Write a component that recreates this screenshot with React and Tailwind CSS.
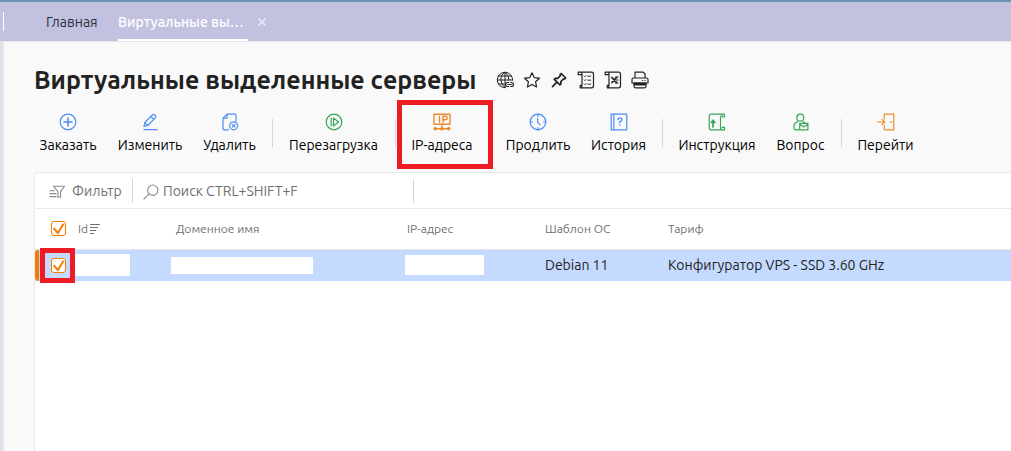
import { useState } from "react";

function Icon({ children, className = "", size = 18, width = 1.2 }) {
  return (
    <svg
      className={`shrink-0 ${className}`}
      width={size}
      height={size}
      viewBox="0 0 18 18"
      fill="none"
      stroke="currentColor"
      strokeWidth={width}
      strokeLinejoin="round"
      strokeLinecap="round"
      aria-hidden="true"
    >
      {children}
    </svg>
  );
}

const icons = {
  add: (
    <>
      <circle cx="9" cy="9" r="7.8" />
      <path d="M9 5v8M5 9h8" strokeWidth="1.6" />
    </>
  ),
  edit: (
    <>
      <path d="M3 13.5l.8-4L11.6 1.8q1-.8 2 0l.9.9q.8 1 0 2L6.8 12.5zM10 3.6l2.8 2.8M4 9.6l2.7 2.8" />
      <path d="M3 16.7h13" />
    </>
  ),
  remove: (
    <>
      <path d="M7.5 16.8H3q-1 0-1-1V5.2L6 1.2h8q1 0 1 1v6M6 1.2v4H2" />
      <circle cx="12.6" cy="12.8" r="4" />
      <path d="M11.2 11.4l2.8 2.8M14 11.4l-2.8 2.8" />
    </>
  ),
  reboot: (
    <>
      <circle cx="9" cy="9" r="7.8" />
      <path d="M6.2 5v8M8.5 5l5 4-5 4z" />
    </>
  ),
  ip: (
    <>
      <path d="M1 1.2h16v10H1zM6.5 3.2v6M10 9.2v-6h2.5q1.7 0 1.7 1.7t-1.7 1.8H10M9 11.5v4M2 15.8h14" strokeWidth="1.4" />
      <circle cx="2.2" cy="15.8" r="1.2" fill="currentColor" />
      <circle cx="9" cy="15.8" r="1.2" fill="currentColor" />
      <circle cx="15.8" cy="15.8" r="1.2" fill="currentColor" />
    </>
  ),
  clock: (
    <>
      <circle cx="9" cy="9" r="7.8" />
      <path d="M9 1.2V3.4M9 14.6v2.2M1.2 9h2.2M14.6 9h2.2M8.6 5.4v3.8l2.7 2.7" />
    </>
  ),
  history: (
    <>
      <path d="M1.2 1.2h15.6v15.6H1.2zM3.8 1.2v15.6" />
      <path d="M8 6.6q0-1.7 1.9-1.7t1.9 1.7q0 1.1-1.9 2.1v1.1M9.9 12v.2" strokeWidth="1.4" />
    </>
  ),
  manual: (
    <>
      <path d="M12.5 3v11.8q0 2 2 2h2v-2.4h-2.3M14.5 16.8H3.2q-2 0-2-2V3.2q0-2 2-2h13.3v2.6h-2.2V3q0-1.6-1.8-1.8" />
      <path d="M5 14V8M3.4 9.4L5 7.2l1.8 2.2z" strokeWidth="1.7" />
    </>
  ),
  question: (
    <>
      <circle cx="8.3" cy="4.7" r="3.5" />
      <path d="M5.6 8.8q-3.6.9-3.6 4.5v1.8q0 1.7 1.6 1.7h3.7M11.3 8.8l1.7.9M7.7 10.3h8.2v6.5H7.7zM7.7 11.2l4.1 2.8 4.1-2.8" />
    </>
  ),
  enter: (
    <path d="M7.3 5.8V1.2h9.5v15.6H7.3v-4.6M.6 9h7M5 6.4L7.8 9 5 11.6M13.2 9h1.8" />
  ),
};

const pageTools = [
  {
    label: "Ссылка на страницу",
    art: (
      <>
        <path d="M16.7 9A7.7 7.7 0 1 0 9 16.7M2.5 5h13M1.3 9h15.4M2.5 13H8M9 1.3v15.4M9 1.3Q4.5 4 4.9 9T9 16.7M9 1.3q4.1 3 4.1 7.7" strokeWidth="1" />
        <path d="M12.7 11.5h-1.1q-2 .1-2 2t2 2h1.1M14.7 11.5h.9q1.9.1 1.9 2t-1.9 2h-.9M12 13.5h3.3" strokeWidth="1.2" />
      </>
    ),
  },
  {
    label: "В избранное",
    art: <path d="M9 1.8l2.2 4.8 5.2.6-3.8 3.6 1 5.2L9 13.4 4.4 16l1-5.2-3.8-3.6 5.2-.6z" />,
  },
  {
    label: "Закрепить",
    art: <path d="M11.2 2.5l4.5 4.5-1 1-1.1-.2-2.7 2.7v2.4l-1 1-5.6-5.6 1-1h2.4l2.7-2.7-.2-1.1zM7 11.1l-4.5 4.5" strokeWidth="1.7" />,
  },
  {
    label: "Журнал",
    art: (
      <>
        <path d="M4 3.7H1.2V1.2h13.3q2 0 2 2v11.6q0 2-2 2H3.2v-2.5H5M4 1.2q1 .5 1 2v11.5q0 1.7-1.6 2.1" />
        <path d="M7.2 5l.7.7L9 4.5M10.7 5.2h3M7.2 9l.7.7L9 8.5M10.7 9.2h3M7.2 13l.7.7L9 12.5M10.7 13.2h3" strokeWidth=".9" />
      </>
    ),
  },
  {
    label: "Экспорт в Excel",
    art: (
      <>
        <path d="M4 3.7H1.2V1.2h13.3q2 0 2 2v11.6q0 2-2 2H3.2v-2.5H5M4 1.2q1 .5 1 2v11.5q0 1.7-1.6 2.1" />
        <path d="M8 6.5l4.5 5M12.5 6.5L8 11.5" strokeWidth="1.8" />
        <path d="M11.5 6h2.6M12 9h2.2M11.5 12h2.6" />
      </>
    ),
  },
  {
    label: "Печать",
    art: (
      <>
        <path d="M4 7V1.2h8.2L14 3v4M2.5 7h13q1.5 0 1.5 1.5v3.5H1V8.5Q1 7 2.5 7zM11.5 9.5h.2M14 9.5h.2" />
        <path d="M3 12h12v3.3q0 1.5-1.5 1.5h-9Q3 16.8 3 15.3z" />
        <path d="M4 13.2h10" strokeWidth="2.4" />
      </>
    ),
  },
];

const actionGroups = [
  [
    { label: "Заказать", icon: "add", tone: "text-[#4a8ff5]", width: "w-[78px]" },
    { label: "Изменить", icon: "edit", tone: "text-[#4a8ff5]", width: "w-[86px]" },
    { label: "Удалить", icon: "remove", tone: "text-[#4a8ff5]", width: "w-[73px]" },
  ],
  [{ label: "Перезагрузка", icon: "reboot", tone: "text-[#38a657]", width: "w-[111px]" }],
  [{ label: "IP-адреса", icon: "ip", tone: "text-[#f08a2c]", width: "w-[82px]", marked: true }],
  [
    { label: "Продлить", icon: "clock", tone: "text-[#4a8ff5]", width: "w-[86px]" },
    { label: "История", icon: "history", tone: "text-[#4a8ff5]", width: "w-[75px]" },
  ],
  [
    { label: "Инструкция", icon: "manual", tone: "text-[#38a657]", width: "w-[98px]" },
    { label: "Вопрос", icon: "question", tone: "text-[#38a657]", width: "w-[69px]" },
  ],
  [{ label: "Перейти", icon: "enter", tone: "text-[#f08a2c]", width: "w-[77px]" }],
];

function CheckBox({ label, checked, onChange }) {
  return (
    <label className="relative block size-[15px]">
      <input
        type="checkbox"
        aria-label={label}
        checked={checked}
        onChange={onChange}
        className="peer block size-[15px] appearance-none rounded-[3px] border border-[#f57c00] bg-white"
      />
      <svg
        className="pointer-events-none absolute inset-0 hidden text-[#f57c00] peer-checked:block"
        width="15"
        height="15"
        viewBox="0 0 15 15"
        fill="none"
        stroke="currentColor"
        strokeWidth="2"
        aria-hidden="true"
      >
        <path d="M2.6 7.2l4.2 4.8L12.6 2.8" />
      </svg>
    </label>
  );
}

export default function App() {
  const [selected, setSelected] = useState(true);
  const toggle = () => setSelected(!selected);

  return (
    <div className="flex min-h-screen flex-col overflow-hidden bg-[#f9f9f9] font-['Ubuntu','Noto_Sans',sans-serif] text-[14px] text-[#222]">
      <nav className="flex h-[42px] shrink-0 items-stretch border-t-2 border-b border-t-[#6b93b8] border-b-[#e6e5ec] bg-[#c3c1e0]">
        <span className="my-[10px] ml-[3px] w-px bg-white" />
        <a href="#home" className="ml-[42px] flex w-[52px] items-center whitespace-nowrap pt-[2px] text-[#27303f]">
          Главная
        </a>
        <a
          href="#servers"
          className="ml-5 flex w-[130px] items-center whitespace-nowrap border-b-2 border-white pt-1 font-medium text-white"
        >
          Виртуальные вы…
        </a>
        <button type="button" aria-label="Закрыть вкладку" className="ml-2 flex w-3 items-center justify-center text-[#eeeef8]">
          <svg width="8" height="8" viewBox="0 0 8 8" stroke="currentColor" strokeWidth="1.4" aria-hidden="true">
            <path d="M.5.5l7 7M7.5.5l-7 7" />
          </svg>
        </button>
      </nav>

      <div className="flex grow">
        <div className="w-1 shrink-0 border-r border-[#ebebeb] bg-[#e0dfe9]" />
        <main className="flex min-w-0 grow flex-col pl-[30px]">
          <header className="flex h-[60px] items-center gap-5 pt-4">
            <h1 className="w-[442px] shrink-0 whitespace-nowrap text-[25px] leading-8 font-semibold">
              Виртуальные выделенные серверы
            </h1>
            <div className="flex gap-[9px]">
              {pageTools.map((tool) => (
                <button key={tool.label} type="button" aria-label={tool.label} className="text-[#222]">
                  <Icon>{tool.art}</Icon>
                </button>
              ))}
            </div>
          </header>

          <div className="-ml-[5px] flex h-[70px] items-start pt-[11px]">
            {actionGroups.map((group, index) => (
              <div key={group[0].label} className="flex">
                {index > 0 && (
                  <span className="flex w-3 shrink-0 justify-center pt-[6px]">
                    <span className="h-7 w-px bg-[#d5d5d5]" />
                  </span>
                )}
                {group.map((action) => (
                  <button
                    key={action.label}
                    type="button"
                    className={`relative flex shrink-0 flex-col items-center gap-1 whitespace-nowrap text-[14px] leading-5 text-black ${action.width}`}
                  >
                    <Icon className={action.tone}>{icons[action.icon]}</Icon>
                    {action.label}
                    {action.marked && (
                      <span className="absolute -top-[13px] -right-[10px] -left-1 h-[69px] border-5 border-[#ed1c24]" />
                    )}
                  </button>
                ))}
              </div>
            ))}
          </div>

          <section className="grow rounded-tl-sm border-t border-l border-[#e9e9e9] bg-white">
            <div className="flex h-9 items-center border-b border-[#ebebeb] pl-[14px] text-[#6f6f6f]">
              <button type="button" className="flex w-[83px] items-center gap-[7px] pt-[2px]">
                <Icon size={16} className="text-[#888]">
                  <path d="M5 2.5h12.5l-4.5 6V15h-3V8.5zM1 7.5h5M1 10.8h7M1 14.2h7" />
                </Icon>
                Фильтр
              </button>
              <span className="h-6 w-px bg-[#d5d5d5]" />
              <label className="flex w-[280px] items-center gap-1 pt-[2px] pl-[10px]">
                <Icon size={16} className="text-[#888]">
                  <circle cx="11" cy="7" r="5.8" />
                  <path d="M6.8 11.2L1 17" />
                </Icon>
                <input
                  type="search"
                  aria-label="Поиск"
                  placeholder="Поиск CTRL+SHIFT+F"
                  className="min-w-0 grow bg-transparent outline-none placeholder:text-[#6f6f6f]"
                />
              </label>
              <span className="h-6 w-px bg-[#d5d5d5]" />
            </div>

            <table className="w-full table-fixed border-collapse text-left">
              <thead>
                <tr className="h-10 border-b border-[#e6e6e6] text-[12px] text-[#707070]">
                  <th className="w-[43px] pl-4">
                    <CheckBox label="Выбрать все" checked={selected} onChange={toggle} />
                  </th>
                  <th className="w-[98px] font-normal">
                    <button type="button" className="flex items-center gap-px">
                      Id
                      <svg width="12" height="12" viewBox="0 0 12 12" stroke="currentColor" aria-hidden="true">
                        <path d="M1 1.5h10M1 4.5h8M1 7.5h6M1 10.5h4" />
                      </svg>
                    </button>
                  </th>
                  <th className="w-[231px] font-normal">Доменное имя</th>
                  <th className="w-[138px] font-normal">IP-адрес</th>
                  <th className="w-[123px] font-normal">Шаблон ОС</th>
                  <th className="font-normal">Тариф</th>
                </tr>
              </thead>
              <tbody>
                <tr className="h-8 bg-[#c5daff]">
                  <td className="relative pl-4 before:absolute before:inset-y-0 before:left-0 before:w-1 before:rounded-l-sm before:bg-[#f57c00]">
                    <CheckBox label="Выбрать сервер" checked={selected} onChange={toggle} />
                    <span className="pointer-events-none absolute top-[-2px] left-[5px] z-10 h-[35px] w-[35px] border-5 border-[#ed1c24]" />
                  </td>
                  <td>
                    <div className="-ml-[3px] h-[22px] w-[55px] bg-white" />
                  </td>
                  <td>
                    <div className="-ml-[5px] h-[17px] w-[142px] bg-white" />
                  </td>
                  <td>
                    <div className="-ml-[2px] h-5 w-[79px] bg-white" />
                  </td>
                  <td>Debian 11</td>
                  <td className="whitespace-nowrap">Конфигуратор VPS - SSD 3.60 GHz</td>
                </tr>
              </tbody>
            </table>
          </section>
        </main>
      </div>
    </div>
  );
}
